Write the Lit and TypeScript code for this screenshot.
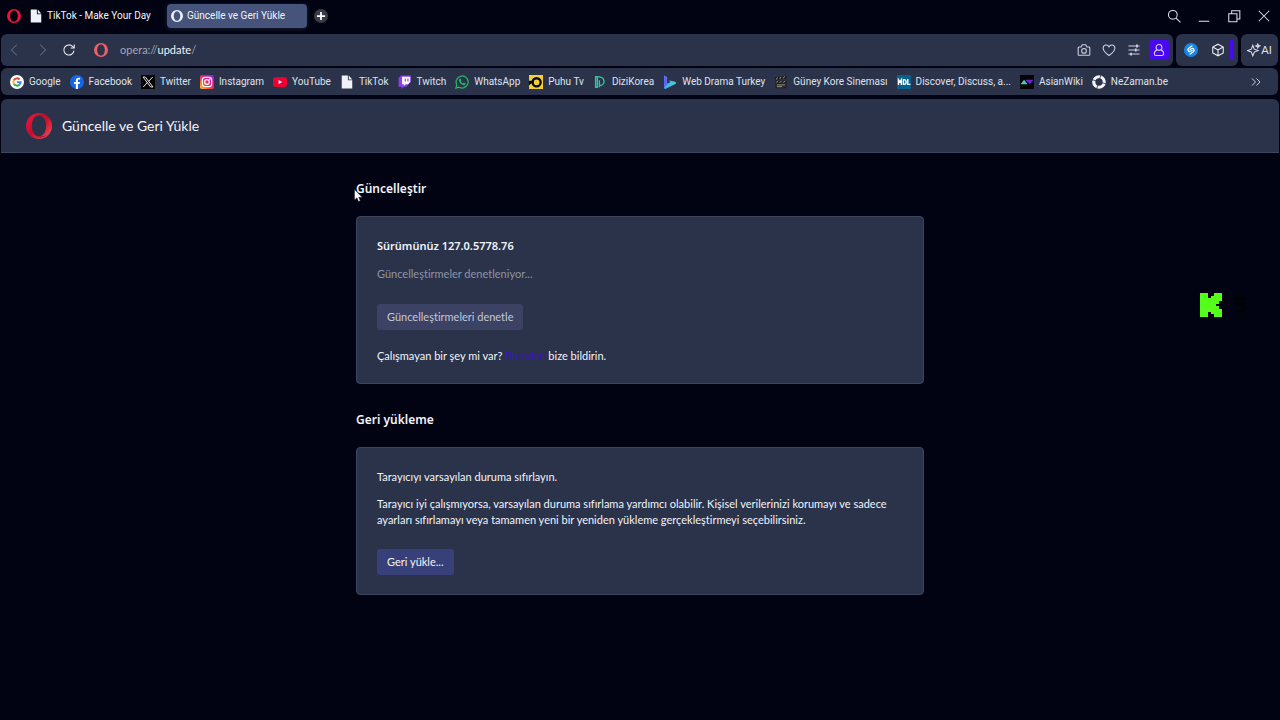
import { LitElement, html, css, svg } from "lit";
import { customElement } from "lit/decorators.js";

const ring = (fill: string) => svg`<path fill=${fill} fill-rule="evenodd" d="M12 0a12 12 0 1 0 0 24a12 12 0 1 0 0-24zM12 2.400c4 0 6.600 4.400 6.600 9.600s-2.600 9.600-6.600 9.600s-6.600-4.400-6.600-9.600s2.600-9.600 6.600-9.600z"/>`;
const page = svg`<path fill="#f1f2f8" d="M3 1h10.500v8h7.500v14H3z"/><path fill="#f1f2f8" d="M15 1l6 6.500h-6z"/>`;

const icons = {
  google: svg`<circle cx="12" cy="12" r="12" fill="#fff"/><g fill="none" stroke-width="3.400"><path stroke="#ea4335" d="M6.600 8.900a6.200 6.200 0 0 1 9.800-1.300"/><path stroke="#fbbc05" d="M6.600 8.900a6.200 6.200 0 0 0 0 6.200"/><path stroke="#34a853" d="M6.600 15.100a6.200 6.200 0 0 0 9.600 1.500"/><path stroke="#4285f4" d="M12 12.200h6.200c0 1.900-.7 3.400-2 4.400"/></g>`,
  facebook: svg`<circle cx="12" cy="12" r="12" fill="#1468e8"/><path fill="#fff" d="M10 24v-8.500H7v-3.600h3V9.500C10 6.300 11.800 4.500 14.700 4.500c1 0 2 .1 2.600.3v3.100h-1.700c-1.500 0-2 .9-2 2v2h3.500l-.6 3.600h-2.900V24z"/>`,
  twitter: svg`<path fill="#050505" d="M0 0h24v24H0z"/><g fill="none" stroke="#e8e8ec" stroke-width="1.700"><path d="M3.500 3.500h4L20.500 20.500h-4z"/><path d="M20 3.500l-7.200 7.800M4 20.500l7-7.800"/></g>`,
  instagram: svg`<defs><linearGradient id="ig" x1="0" y1="1" x2="1" y2="0"><stop offset="0" stop-color="#ffc83a"/><stop offset=".3" stop-color="#fb5a2d"/><stop offset=".6" stop-color="#e5128e"/><stop offset="1" stop-color="#7a28f0"/></linearGradient></defs><rect width="24" height="24" rx="3" fill="url(#ig)"/><g fill="none" stroke="#fff" stroke-width="2"><rect x="4" y="4" width="16" height="16" rx="4.500"/><circle cx="12" cy="12" r="4"/></g><circle cx="16.800" cy="7.200" r="1.200" fill="#fff"/>`,
  youtube: svg`<rect y="3.500" width="24" height="17" rx="4.500" fill="#ee0033"/><path fill="#fff" d="M9.500 8.500v7l6.300-3.500z"/>`,
  page,
  twitch: svg`<path fill="#8c3cf2" d="M5 1L1 5v15h5v4l4-4h4l8-8V1z"/><path fill="#fff" d="M7 3h14v9l-4 4h-4l-3 3v-3H7z"/><path stroke="#8c3cf2" stroke-width="2" d="M12.500 6v5M17 6v5"/>`,
  whatsapp: svg`<g fill="none" stroke="#25b566" stroke-width="2.200"><path d="M1.500 22.500l1.600-5.800a10.300 10.300 0 1 1 4 4.200z"/></g><path fill="#25b566" d="M8.500 6.500l1.300 0 1.200 3-1.200 1.500c1 1.700 2.200 2.700 4 3.500l1.400-1.600 3 1.500c0 2-1.700 3.200-3.400 3C10.500 16.700 7 13 6.700 9.500c0-1.300.8-2.600 1.800-3z"/>`,
  puhu: svg`<path fill="#f3cf2f" d="M0 0h24v24H0z"/><circle cx="13" cy="12.500" r="7" fill="none" stroke="#080808" stroke-width="4"/><path fill="#080808" d="M0 10h8v4H4l-4 4z"/>`,
  dizi: svg`<path fill="none" stroke="#35c2a2" stroke-width="2.400" d="M4.500 3v18h3V3zM9 3c6 0 10 3.500 10 8s-4 7-8 7v3M11 18V9"/>`,
  drama: svg`<defs><linearGradient id="dr" x1="0" x2="1"><stop offset="0" stop-color="#3aa9ff"/><stop offset="1" stop-color="#48d5c8"/></linearGradient></defs><path fill="url(#dr)" d="M2 1l5 3v11l6-3-3-3 12 3v3L4 24l-2-1z"/><path fill="#5b65f2" d="M2 1l5 4v11l-5 6z"/>`,
  cinema: svg`<path fill="#252529" d="M2 9h20v14H2z"/><path fill="#1c1c20" d="M1 4l20-3 1 5L2 9z"/><path stroke="#a7a48f" stroke-width="1.500" d="M4 8l2-4M10 7l2-4M16 6l2-4M4 13l3-3M10 13l3-3M16 13l3-3M5 17h14M5 20h9"/>`,
  mdl: svg`<path fill="#08618c" d="M0 0h24v24H0z"/><path fill="none" stroke="#fff" stroke-width="2.400" d="M2.500 17V8l2.500 4 2.500-4v9M11 8v8h1.500c2 0 3-2 3-4s-1-4-3-4zM18.500 7v9H23"/>`,
  asian: svg`<path fill="#050507" d="M0 0h24v24H0z"/><path fill="#43d3b0" d="M1 16l6-8 6 8z"/><path fill="#6c22d8" d="M9 8h14l-6 8z"/>`,
  nezaman: svg`<circle cx="12" cy="12" r="9" fill="none" stroke="#f4f5fa" stroke-width="5.500"/><path stroke="#2a324a" stroke-width="1.400" d="M15 0l-2 8M24 15l-8-2M8 24l2-7M0 8l7 2"/>`,
};

const bookmarks: [keyof typeof icons, string][] = [
  ["google", "Google"], ["facebook", "Facebook"], ["twitter", "Twitter"], ["instagram", "Instagram"],
  ["youtube", "YouTube"], ["page", "TikTok"], ["twitch", "Twitch"], ["whatsapp", "WhatsApp"],
  ["puhu", "Puhu Tv"], ["dizi", "DiziKorea"], ["drama", "Web Drama Turkey"], ["cinema", "Güney Kore Sineması"],
  ["mdl", "Discover, Discuss, a..."], ["asian", "AsianWiki"], ["nezaman", "NeZaman.be"],
];

const icon = (body: unknown, cls = "i14") => html`<svg class=${cls} viewBox="0 0 24 24" aria-hidden="true">${body}</svg>`;

@customElement("app-root")
export class AppRoot extends LitElement {
  static styles = css`
    :host { display: block; position: relative; min-height: 100vh; background: #010312; color: #f2f3f8;
      font: 11px/16px Lato, "Noto Sans", sans-serif; font-variant-ligatures: none; overflow: hidden; }
    * { box-sizing: border-box; }
    svg { display: block; flex: none; }
    button { font: inherit; color: inherit; border: 0; background: none; padding: 0; display: flex; align-items: center; justify-content: center; }
    a { color: inherit; text-decoration: none; }
    h1, h2, h3, p { margin: 0; }
    .i12 { width: 12px; height: 12px; }
    .i14 { width: 14px; height: 14px; }
    .i26 { width: 26px; height: 26px; }
    .line { fill: none; stroke: currentColor; stroke-width: 1.800; }
    .tabs { height: 34px; display: flex; align-items: center; padding: 0 9px 2px 7px; }
    .menu { margin-right: 2px; }
    .tab { height: 24px; padding: 0 6px; gap: 4px; border-radius: 4px; justify-content: flex-start; white-space: nowrap; font: 10px/16px Roboto, sans-serif; }
    .tab.idle { width: 144px; }
    .tab.active { width: 140px; background: #46547c; margin-right: 7px; padding: 0 4px; box-shadow: 0 1px 5px #1c2238; }
    .plus { width: 14px; height: 14px; border-radius: 50%; background: #3a3b45; }
    .win { margin-left: auto; display: flex; gap: 16px; color: #dcdfe8; }
    .bars { display: flex; gap: 3px; padding: 0 2px 0 1px; }
    .bar { height: 32px; background: #2b334b; border-radius: 6px; display: flex; align-items: center; }
    .address { flex: 1; padding: 0 4px 0 7px; gap: 13px; }
    .address .dim { color: #626a80; }
    .url { flex: 1; min-width: 0; display: flex; align-items: center; gap: 12px; padding-left: 5px; color: #a3a8b7; }
    .url b { font-weight: 400; color: #f2f3f8; }
    .acts { display: flex; align-items: center; gap: 11px; color: #cdd1df; }
    .user { width: 20px; height: 20px; background: #4a08f0; border-radius: 3px; margin-left: -3px; color: #d5c9ff; }
    .ext { padding: 0 4px 0 8px; gap: 13px; }
    .strip { width: 4px; height: 20px; background: #4a08f0; margin-left: -8px; }
    .ai { width: 37px; justify-content: center; color: #dfe2ec; }
    .marks { height: 27px; margin: 2px 2px 0 1px; padding: 0 16px 0 9px; gap: 9px; overflow: hidden; color: #dfe2ec; font: 10px/16px Roboto, sans-serif; }
    .mark { display: flex; align-items: center; gap: 5px; white-space: nowrap; }
    .more { margin-left: auto; }
    .head { margin: 4px 1px 0; height: 54px; border-radius: 6px 6px 0 0; background: #2b334b; border-bottom: 1px solid #3d455c; padding: 0 25px; display: flex; align-items: center; gap: 10px; }
    h1 { font-size: 14px; line-height: 20px; font-weight: 400; }
    main { max-width: 568px; margin: 26px auto 0; }
    h2 { font: 600 12px/20px "Noto Sans", sans-serif; margin-bottom: 17px; }
    h3 { font: 600 11px/16px "Noto Sans", sans-serif; }
    .card { background: #2b334b; border: 1px solid #3d455c; border-radius: 4px; padding: 21px 20px 19px; margin-bottom: 26px; }
    .muted { color: #8e94a5; margin-top: 12px; }
    .btn { height: 26px; padding: 0 10px; border-radius: 3px; background: #38407a; }
    .btn.off { background: #3b4263; color: #c3c7d8; margin: 22px 0 18px; }
    .report { color: #3b16b4; text-decoration: underline; }
    .gap { margin: 11px 0 21px; }
    .mark-k { position: absolute; right: 34px; top: 293px; display: flex; gap: 12px; }
    .spot { position: relative; }
    .pointer { position: absolute; left: -2px; top: 10px; }
  `;

  render() {
    return html`
      <header>
        <div class="tabs">
          <button class="menu" aria-label="Opera">${icon(ring("#ee1238"))}</button>
          <button class="tab idle">${icon(page)}<span>TikTok - Make Your Day</span></button>
          <button class="tab active">${icon(ring("#eef1fb"), "i12")}<span>Güncelle ve Geri Yükle</span></button>
          <button class="plus" aria-label="Yeni sekme">${icon(svg`<path stroke="#fff" stroke-width="3" d="M12 5v14M5 12h14"/>`)}</button>
          <div class="win">
            <button aria-label="Ara">${icon(svg`<g class="line"><circle cx="10" cy="10" r="7.500"/><path d="M15.500 15.500L23 23"/></g>`)}</button>
            <button aria-label="Küçült">${icon(svg`<path class="line" d="M3 21h18"/>`)}</button>
            <button aria-label="Geri al">${icon(svg`<g class="line"><path d="M3 8h14v14H3zM8 8V3h14v14h-5"/></g>`)}</button>
            <button aria-label="Kapat">${icon(svg`<path class="line" d="M3 3l18 18M21 3L3 21"/>`)}</button>
          </div>
        </div>
        <div class="bars">
          <div class="bar address">
            <button class="dim" aria-label="Geri">${icon(svg`<path class="line" d="M15 3l-9 9 9 9"/>`)}</button>
            <button class="dim" aria-label="İleri">${icon(svg`<path class="line" d="M9 3l9 9-9 9"/>`)}</button>
            <button aria-label="Yenile">${icon(svg`<path class="line" d="M20.500 13a8.700 8.700 0 1 1-2.500-7.200L20.500 8"/><path class="line" d="M21 2.500v6h-6"/>`)}</button>
            <div class="url">${icon(ring("#ee6068"))}<span>opera://<b>update</b>/</span></div>
            <div class="acts">
              <button aria-label="Anlık görüntü">${icon(svg`<g class="line"><path d="M2 8.500Q2 7 3.500 7H7l2-4h6l2 4h3.500Q22 7 22 8.500v11Q22 21 20.500 21h-17Q2 21 2 19.500z"/><circle cx="12" cy="13.500" r="4"/></g>`)}</button>
              <button aria-label="Favori">${icon(svg`<path class="line" d="M12 21.500C6 17 2 13.500 2 8.800C2 2.500 9.500 1.500 12 6.500C14.500 1.500 22 2.500 22 8.800C22 13.500 18 17 12 21.500z"/>`)}</button>
              <button aria-label="Ayarlar">${icon(svg`<g class="line"><path d="M2.500 5h19M2.500 12h19M2.500 19h19"/><path stroke-width="3" d="M17 2.500v5M15 9.500v5M7 16.500v5"/></g>`)}</button>
              <button class="user" aria-label="Profil">${icon(svg`<g class="line"><circle cx="12" cy="7.500" r="5"/><path d="M8.500 12C5 13 4 15 4 18.500Q4 21.500 7 21.500h10q3 0 3-3C20 15 19 13 15.500 12"/></g>`)}</button>
            </div>
          </div>
          <div class="bar ext">
            <button aria-label="Shazam">${icon(svg`<circle cx="12" cy="12" r="12" fill="#1687e5"/><g fill="none" stroke="#fff" stroke-width="2.200" stroke-linecap="round"><path d="M13.500 5L8.500 8.500C4.500 11.500 8 16.500 11.500 14.200L14 12.500"/><path d="M10.500 19l5-3.500C19.500 12.500 16 7.500 12.500 9.800L10 11.500"/></g>`)}</button>
            <button aria-label="Uzantılar">${icon(svg`<path class="line" d="M12 2l9 5v10l-9 5-9-5V7zM3 7l9 5 9-5M12 12v10"/>`)}</button>
            <span class="strip"></span>
          </div>
          <button class="bar ai">${icon(svg`<path class="line" d="M10 4l2.500 6.500L19 13l-6.500 2.500L10 22l-2.500-6.500L1 13l6.500-2.500z"/><path class="line" d="M18.500 1.500l1 2.500 2.500 1-2.500 1-1 2.500-1-2.500-2.500-1 2.500-1z"/>`)}<span>AI</span></button>
        </div>
        <nav class="bar marks">
          ${bookmarks.map(([k, t]) => html`<a class="mark" href="#">${icon(icons[k])}<span>${t}</span></a>`)}
          <button class="more" aria-label="Daha fazla">${icon(svg`<path class="line" d="M4 5l7 7-7 7M13 5l7 7-7 7"/>`, "i12")}</button>
        </nav>
      </header>
      <section class="head">
        ${icon(svg`<defs><linearGradient id="o" x1="0" x2="1" y2="1"><stop offset="0" stop-color="#f0183c"/><stop offset=".5" stop-color="#c50d2e"/><stop offset="1" stop-color="#f5535a"/></linearGradient></defs>${ring("url(#o)")}<path fill="#a50c24" opacity=".7" d="M8 4C11 .5 16 .8 19.500 3.600C17 2.600 14 2.200 12 2.400C10.500 2.400 9 3 8 4zM8 20C11 23.500 16 23.200 19.500 20.400C17 21.400 14 21.800 12 21.600C10.500 21.600 9 21 8 20z"/>`, "i26")}
        <h1>Güncelle ve Geri Yükle</h1>
      </section>
      <main>
        <div class="spot">
          <h2>Güncelleştir</h2>
          <svg class="pointer" width="9" height="13" viewBox="0 0 9 13" aria-hidden="true"><path fill="#fff" stroke="#222" stroke-width=".5" d="M.5.5v10.500l2.400-2.200 1.600 3.700 1.800-.8-1.600-3.500h3.500z"/></svg>
        </div>
        <section class="card">
          <h3>Sürümünüz 127.0.5778.76</h3>
          <p class="muted">Güncelleştirmeler denetleniyor...</p>
          <button class="btn off" disabled>Güncelleştirmeleri denetle</button>
          <p>Çalışmayan bir şey mi var? <a class="report" href="#">Buradan</a> bize bildirin.</p>
        </section>
        <h2>Geri yükleme</h2>
        <section class="card">
          <p>Tarayıcıyı varsayılan duruma sıfırlayın.</p>
          <p class="gap">Tarayıcı iyi çalışmıyorsa, varsayılan duruma sıfırlama yardımcı olabilir. Kişisel verilerinizi korumayı ve sadece ayarları sıfırlamayı veya tamamen yeni bir yeniden yükleme gerçekleştirmeyi seçebilirsiniz.</p>
          <button class="btn">Geri yükle...</button>
        </section>
      </main>
      <div class="mark-k">
        <svg width="22" height="24" viewBox="0 0 22 24" aria-hidden="true"><path fill="#55ff1c" d="M0 0h8v5h3V3h3V0h8v8h-3v3h-3v2h3v3h3v8h-8v-3h-3v-2H8v5H0z"/></svg>
        <svg width="12" height="24" viewBox="0 0 12 24" aria-hidden="true"><path fill="none" stroke="#010206" stroke-width="3" d="M10 11H2V5h8v13H2"/></svg>
      </div>`;
  }
}
